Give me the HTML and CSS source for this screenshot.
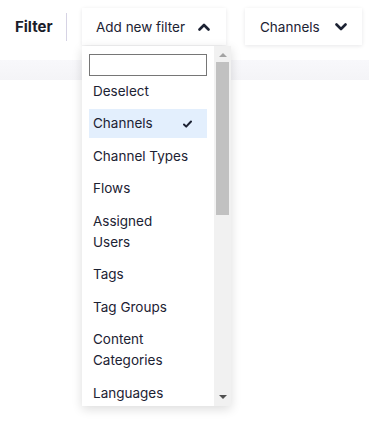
FILE: index.html
```html
<!DOCTYPE html>
<html>
<head>
<meta charset="utf-8">
<link rel="stylesheet" href="styles.css">
</head>
<body>
<div class="page">
  <header class="header">
    <span class="title">Filter</span>
    <span class="divider"></span>
    <div class="add-wrap">
      <button class="btn btn-add">
        <span>Add new filter</span>
        <svg class="chev" width="12" height="8" viewBox="0 0 12 8"><polyline points="1.5,6.5 6,2 10.5,6.5" fill="none" stroke="#1c2233" stroke-width="2.6" stroke-linecap="round" stroke-linejoin="round"/></svg>
      </button>
      <div class="dropdown">
        <div class="dd-content">
          <input class="search" type="text">
          <ul class="list">
            <li class="item">Deselect</li>
            <li class="item selected"><span>Channels</span>
              <svg width="9" height="8" viewBox="0 0 9 8"><polyline points="1,4.5 3.2,6.6 8,1.5" fill="none" stroke="#1c2233" stroke-width="2" stroke-linecap="round" stroke-linejoin="round"/></svg>
            </li>
            <li class="item">Channel Types</li>
            <li class="item">Flows</li>
            <li class="item">Assigned<br>Users</li>
            <li class="item">Tags</li>
            <li class="item">Tag Groups</li>
            <li class="item">Content<br>Categories</li>
            <li class="item">Languages</li>
          </ul>
        </div>
        <div class="scrollbar">
          <span class="arrow up"></span>
          <span class="thumb"></span>
          <span class="track"></span>
          <span class="arrow down"></span>
        </div>
      </div>
    </div>
    <button class="btn btn-channels">
      <span>Channels</span>
      <svg class="chev" width="12" height="8" viewBox="0 0 12 8"><polyline points="1.5,1.5 6,6 10.5,1.5" fill="none" stroke="#1c2233" stroke-width="2.6" stroke-linecap="round" stroke-linejoin="round"/></svg>
    </button>
  </header>
  <div class="band"></div>
  <main class="content"></main>
</div>
</body>
</html>
```

FILE: styles.css
```css
* { box-sizing: border-box; }
html, body { margin: 0; padding: 0; background: #fff; }
body {
  font-family: Inter, "Noto Sans", sans-serif;
  color: #1c2233;
  width: 369px;
  height: 431px;
  overflow: hidden;
}
.header {
  height: 60px;
  display: flex;
  align-items: center;
  padding: 8px 6px 15px 15px;
  background: #fff;
}
.title {
  font-weight: 700;
  font-size: 15px;
  color: #1b1d2a;
  width: 37px;
}
.divider {
  width: 1px;
  height: 28px;
  background: #d6d3e4;
  margin: 1px 15px 0 14px;
}
.add-wrap { position: relative; }
.btn {
  height: 37px;
  border: none;
  background: #fff;
  display: flex;
  align-items: center;
  justify-content: space-between;
  font-family: inherit;
  font-size: 13.5px;
  color: #1c2233;
  box-shadow: 0 1px 4px rgba(20, 20, 40, 0.10);
  cursor: pointer;
}
.btn-add { width: 144px; padding: 0 16px 0 14px; }
.btn-channels { width: 117px; padding: 0 15px 0 15px; margin-left: 19px; }
.chev { display: block; }
.dropdown {
  position: absolute;
  left: 0;
  top: 38px;
  width: 149px;
  height: 360px;
  background: #fff;
  display: flex;
  box-shadow: 0 3px 10px rgba(0, 0, 0, 0.14);
  z-index: 5;
}
.dd-content {
  width: 132px;
  padding: 8px 7px 0 7px;
  overflow: hidden;
}
.search {
  display: block;
  width: 118px;
  height: 22px;
  border: 1px solid #767676;
  margin: 0;
  padding: 0 4px;
  outline: none;
}
.list {
  list-style: none;
  margin: 0;
  padding: 0;
  display: flex;
  flex-direction: column;
  gap: 3.5px;
  font-size: 13.5px;
  line-height: 21px;
}
.item {
  padding: 4px 4px;
  display: flex;
  align-items: center;
  justify-content: space-between;
}
.item:first-child { margin-top: 0.5px; }
.item.selected {
  background: #e3effd;
  padding-right: 15px;
}
.scrollbar {
  width: 17px;
  background: #f1f1f1;
  display: flex;
  flex-direction: column;
  align-items: center;
}
.arrow {
  width: 0;
  height: 0;
  border-left: 4px solid transparent;
  border-right: 4px solid transparent;
}
.arrow.up {
  border-bottom: 4px solid #a3a3a3;
  margin-top: 7px;
}
.thumb {
  width: 13px;
  height: 153px;
  background: #c1c1c1;
  margin-top: 5px;
}
.track { flex: 1; }
.arrow.down {
  border-top: 4px solid #505050;
  margin-bottom: 7px;
}
.band {
  height: 20px;
  background: linear-gradient(#f8f8fb, #f4f4f7);
  box-shadow: 0 1px 1px rgba(0, 0, 0, 0.03);
}
.content { height: 351px; background: #fff; }
```
